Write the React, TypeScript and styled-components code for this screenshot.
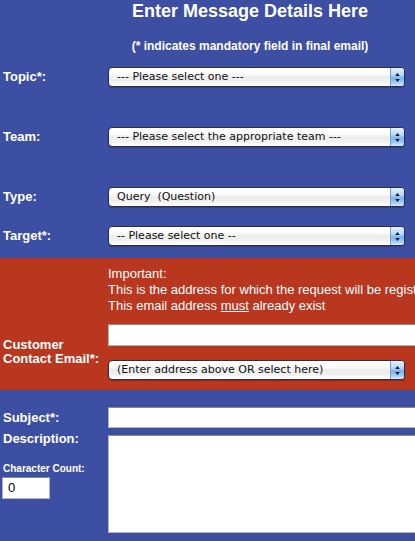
import React from "react";
import styled, { createGlobalStyle } from "styled-components";

const BLUE = "#3d4fa3";
const RED = "#b9361f";

const Global = createGlobalStyle`
  html, body { margin: 0; padding: 0; background: ${BLUE}; overflow: hidden; }
  #root { width: 415px; overflow: hidden; }
`;

const Page = styled.div`
  width: 500px;
  background: ${BLUE};
  color: #fff;
  font-family: "Liberation Sans", Arial, sans-serif;
  padding-bottom: 20px;
`;

const Title = styled.h1`
  margin: 0;
  font-size: 18px;
  line-height: 22px;
  font-weight: bold;
  text-align: center;
`;

const Subtitle = styled.p`
  margin: 16px 0 0;
  font-size: 12px;
  line-height: 16px;
  font-weight: bold;
  text-align: center;
`;

const Row = styled.div<{ $mt: number; $align?: string }>`
  display: grid;
  grid-template-columns: 108px 1fr;
  align-items: ${(p) => p.$align || "center"};
  margin-top: ${(p) => p.$mt}px;
`;

const Label = styled.label`
  padding-left: 3px;
  font-size: 13px;
  font-weight: bold;
  line-height: 14px;
`;

const SmallLabel = styled.div`
  padding-left: 3px;
  margin-top: 17px;
  font-size: 10px;
  font-weight: bold;
  line-height: 12px;
`;

const SelectBox = styled.div`
  width: 297px;
  height: 20px;
  box-sizing: border-box;
  border: 1px solid #2a2d45;
  border-radius: 4px;
  background: linear-gradient(#ffffff 0%, #fafafa 35%, #ececec 50%, #f1f1f1 75%, #ffffff 100%);
  display: flex;
  align-items: stretch;
  overflow: hidden;
  box-shadow: 0 1px 1px rgba(0, 0, 0, 0.2);
`;

const SelectText = styled.span`
  flex: 1;
  padding-left: 8px;
  font-family: "DejaVu Sans", Verdana, sans-serif;
  font-size: 11px;
  line-height: 18px;
  color: #111;
  white-space: nowrap;
  overflow: hidden;
`;

const Stepper = styled.span`
  width: 13px;
  border-left: 1px solid #7f9cc4;
  background: linear-gradient(#e2f1fd 0%, #b6d8f8 40%, #78b3ef 55%, #9fcaf6 80%, #d9eefe 100%);
  display: flex;
  align-items: center;
  justify-content: center;
`;

const Alert = styled.section`
  margin-top: 12px;
  background: ${RED};
  padding: 8px 0 10px;
  display: grid;
  grid-template-columns: 108px 1fr;
  row-gap: 10px;
  align-items: center;
`;

const Note = styled.div`
  grid-column: 2;
  font-size: 13px;
  line-height: 16px;
  white-space: nowrap;
  u {
    text-decoration: underline;
  }
`;

const Stack = styled.div`
  display: flex;
  flex-direction: column;
  gap: 14px;
`;

const TextInput = styled.div<{ $w: number; $h: number }>`
  width: ${(p) => p.$w}px;
  height: ${(p) => p.$h}px;
  box-sizing: border-box;
  background: #fff;
  border: 1px solid #b5b5b5;
  border-top-color: #8a8a8a;
  color: #000;
  font-family: "Liberation Sans", Arial, sans-serif;
  font-size: 13px;
  line-height: 20px;
  padding-left: 5px;
`;

const LeftCol = styled.div`
  display: flex;
  flex-direction: column;
`;

const CountBox = styled(TextInput)`
  margin: 2px 0 0 2px;
`;

const TextArea = styled(TextInput)`
  margin-top: 3px;
`;

const Arrows = () => (
  <svg width="7" height="11" viewBox="0 0 7 11">
    <path d="M3.5 1 L5.8 4 L1.2 4 Z" fill="#14182a" />
    <path d="M1.2 7 L5.8 7 L3.5 10 Z" fill="#14182a" />
  </svg>
);

const Select = ({ children }: { children: React.ReactNode }) => (
  <SelectBox>
    <SelectText>{children}</SelectText>
    <Stepper>
      <Arrows />
    </Stepper>
  </SelectBox>
);

export default function App() {
  return (
    <>
      <Global />
      <Page>
        <Title>Enter Message Details Here</Title>
        <Subtitle>(* indicates mandatory field in final email)</Subtitle>

        <Row $mt={13}>
          <Label>Topic*:</Label>
          <Select>--- Please select one ---</Select>
        </Row>
        <Row $mt={40}>
          <Label>Team:</Label>
          <Select>--- Please select the appropriate team ---</Select>
        </Row>
        <Row $mt={40}>
          <Label>Type:</Label>
          <Select>Query&nbsp;&nbsp;(Question)</Select>
        </Row>
        <Row $mt={19}>
          <Label>Target*:</Label>
          <Select>-- Please select one --</Select>
        </Row>

        <Alert>
          <Note>
            Important:
            <br />
            This is the address for which the request will be registered
            <br />
            This email address <u>must</u> already exist
          </Note>
          <Label>
            Customer
            <br />
            Contact Email*:
          </Label>
          <Stack>
            <TextInput $w={390} $h={22} />
            <Select>(Enter address above OR select here)</Select>
          </Stack>
        </Alert>

        <Row $mt={17}>
          <Label>Subject*:</Label>
          <TextInput $w={390} $h={21} />
        </Row>
        <Row $mt={4} $align="start">
          <LeftCol>
            <Label>Description:</Label>
            <SmallLabel>Character Count:</SmallLabel>
            <CountBox $w={48} $h={22}>0</CountBox>
          </LeftCol>
          <TextArea $w={390} $h={98} />
        </Row>
      </Page>
    </>
  );
}
